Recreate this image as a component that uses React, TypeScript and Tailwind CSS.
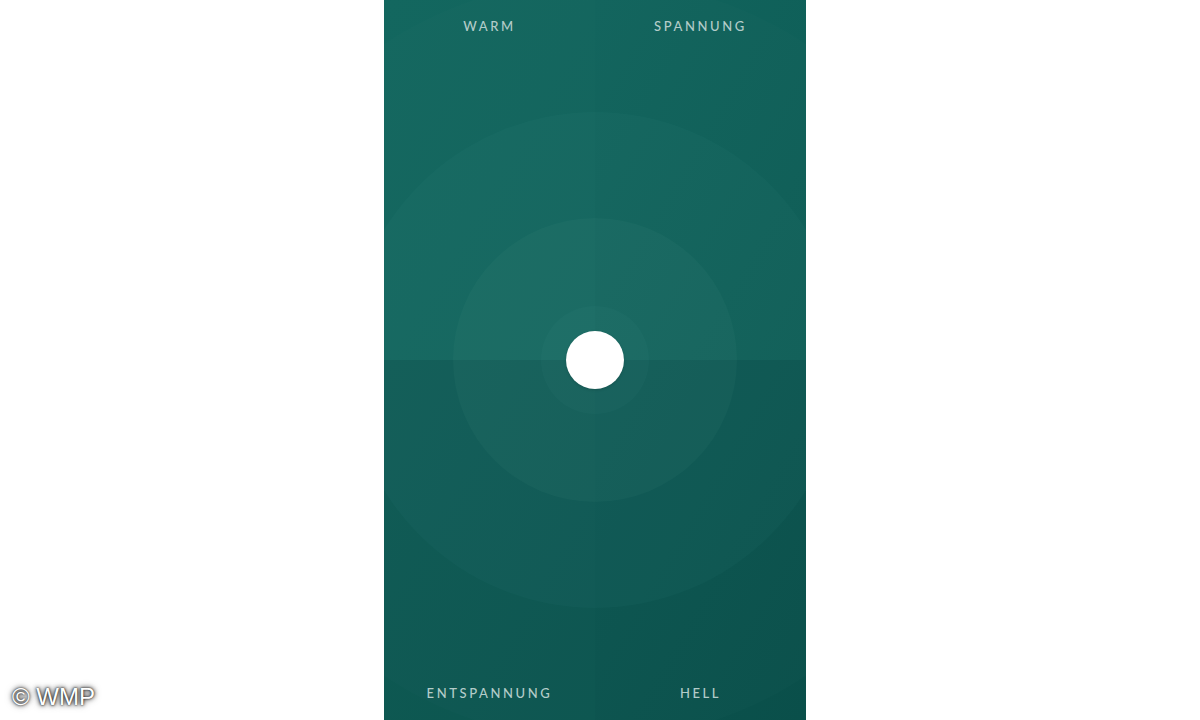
import React from "react";

const labelCls =
  "relative z-10 text-[13px] font-medium uppercase tracking-[0.2em] text-[#b3ccc9]";

function Quadrant({
  label,
  tone,
  bottom,
}: {
  label: string;
  tone: string;
  bottom?: boolean;
}) {
  return (
    <div
      className={`flex justify-center ${tone} ${
        bottom ? "items-end pb-[17px]" : "items-start pt-[17px]"
      }`}
    >
      <span className={labelCls}>{label}</span>
    </div>
  );
}

export default function App() {
  return (
    <div
      className="flex h-[720px] w-[1200px] bg-white"
      style={{ fontFamily: "Lato, 'Open Sans', sans-serif" }}
    >
      {/* watermark column */}
      <div className="flex w-[384px] items-end pb-[11px] pl-[12px]">
        <span
          className="text-[24px] leading-none text-white [text-shadow:0_0_2px_#111,0_0_4px_#333,0_0_7px_#666]"
          style={{ fontFamily: "'Liberation Sans', Arial, sans-serif" }}
        >
          © WMP
        </span>
      </div>

      {/* mood pad */}
      <div className="relative h-full w-[422px] overflow-hidden">
        <div className="grid h-full grid-cols-[211px_211px] grid-rows-2">
          <Quadrant label="Warm" tone="bg-gradient-to-br from-[#13675f] to-[#11635c]" />
          <Quadrant label="Spannung" tone="bg-gradient-to-br from-[#11645d] to-[#0e5d56]" />
          <Quadrant label="Entspannung" tone="bg-gradient-to-br from-[#0f5b54] to-[#0c554f]" bottom />
          <Quadrant label="Hell" tone="bg-gradient-to-br from-[#0c5651] to-[#0a4f4a]" bottom />
        </div>

        {/* concentric rings around the knob */}
        <div className="pointer-events-none absolute left-[211px] top-[360px]">
          <div className="absolute left-[-380px] top-[-380px] h-[760px] w-[760px] rounded-full bg-white/[0.01]" />
          <div className="absolute left-[-248px] top-[-248px] h-[496px] w-[496px] rounded-full bg-[#bff5ee]/[0.025]" />
          <div className="absolute left-[-142px] top-[-142px] h-[284px] w-[284px] rounded-full bg-[#bff5ee]/[0.03]" />
          <div className="absolute left-[-54px] top-[-54px] h-[108px] w-[108px] rounded-full bg-[#bff5ee]/[0.022]" />
          <div className="absolute left-[-29px] top-[-29px] h-[58px] w-[58px] rounded-full bg-white shadow-[0_1px_3px_rgba(0,0,0,0.15)]" />
        </div>
      </div>
    </div>
  );
}
